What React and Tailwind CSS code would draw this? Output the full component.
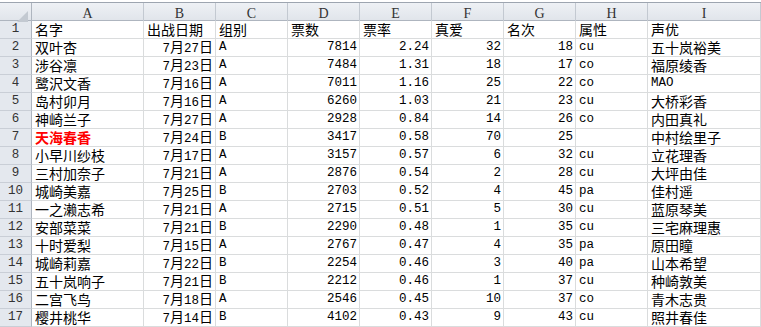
import React from 'react';

const cols = ['A', 'B', 'C', 'D', 'E', 'F', 'G', 'H', 'I'];

const rows = [
  ['双叶杏', '7|27', 'A', '7814', '2.24', '32', '18', 'cu', '五十岚裕美'],
  ['涉谷凛', '7|23', 'A', '7484', '1.31', '18', '17', 'co', '福原绫香'],
  ['鹭沢文香', '7|16', 'A', '7011', '1.16', '25', '22', 'co', 'MAO'],
  ['岛村卯月', '7|16', 'A', '6260', '1.03', '21', '23', 'cu', '大桥彩香'],
  ['神崎兰子', '7|27', 'A', '2928', '0.84', '14', '26', 'co', '内田真礼'],
  ['天海春香', '7|24', 'B', '3417', '0.58', '70', '25', '', '中村绘里子'],
  ['小早川纱枝', '7|17', 'A', '3157', '0.57', '6', '32', 'cu', '立花理香'],
  ['三村加奈子', '7|21', 'A', '2876', '0.54', '2', '28', 'cu', '大坪由佳'],
  ['城崎美嘉', '7|25', 'B', '2703', '0.52', '4', '45', 'pa', '佳村遥'],
  ['一之濑志希', '7|21', 'A', '2715', '0.51', '5', '30', 'cu', '蓝原琴美'],
  ['安部菜菜', '7|21', 'B', '2290', '0.48', '1', '35', 'cu', '三宅麻理惠'],
  ['十时爱梨', '7|15', 'A', '2767', '0.47', '4', '35', 'pa', '原田瞳'],
  ['城崎莉嘉', '7|22', 'B', '2254', '0.46', '3', '40', 'pa', '山本希望'],
  ['五十岚响子', '7|21', 'B', '2212', '0.46', '1', '37', 'cu', '种崎敦美'],
  ['二宫飞鸟', '7|18', 'A', '2546', '0.45', '10', '37', 'co', '青木志贵'],
  ['樱井桃华', '7|14', 'B', '4102', '0.43', '9', '43', 'cu', '照井春佳'],
];

const gridCols = 'grid grid-cols-[32px_112px_repeat(7,72px)_1fr]';
const cjk = "font-['Noto_Sans_CJK_SC',sans-serif] text-[14px]";
const mono = "font-['Liberation_Mono','Noto_Sans_CJK_SC',monospace] text-[12.5px]";

function Cell({ children, right, red, className = '' }) {
  return (
    <div
      className={`h-[18px] border-b border-r border-[#dadcdd] flex items-center overflow-hidden whitespace-nowrap leading-[17px] ${
        red ? 'text-[#ff0000] font-bold' : 'text-black'
      } ${right ? 'justify-end pr-[2px]' : 'pl-[3px]'} ${className}`}
    >
      {children}
    </div>
  );
}

function DateText({ v }) {
  const [m, d] = v.split('|');
  return (
    <span className={cjk}>
      <span className={mono}>{m}</span>月<span className={mono}>{d}</span>日
    </span>
  );
}

function RowHead({ n }) {
  return (
    <div className="h-[18px] bg-[#e4e8ee] border-b border-r border-[#aeb5bf] border-b-[#c9ced6] flex items-center justify-center text-[12.5px] text-[#333] font-['Liberation_Mono',monospace]">
      {n}
    </div>
  );
}

export default function App() {
  return (
    <div className="w-[761px] h-[327px] overflow-hidden bg-white pt-[2px]">
      {/* column headers */}
      <div className={`${gridCols} h-[19px] border-t border-b border-t-[#9da5b0] border-b-[#aeb5bf] bg-gradient-to-b from-[#eef1f5] to-[#e1e5eb]`}>
        <div className="relative border-r border-[#aeb5bf]">
          <svg className="absolute right-[3px] bottom-[2px]" width="11" height="11" viewBox="0 0 11 11">
            <polygon points="11,0 11,11 0,11" fill="#c3c9d1" />
          </svg>
        </div>
        {cols.map((c) => (
          <div
            key={c}
            className="border-r border-[#c3c9d1] flex items-center justify-center text-[14px] text-[#333] font-['Liberation_Serif',serif]"
          >
            {c}
          </div>
        ))}
      </div>

      {/* header row 1 */}
      <div className={gridCols}>
        <RowHead n={1} />
        {['名字', '出战日期', '组别', '票数', '票率', '真爱', '名次', '属性', '声优'].map((t) => (
          <Cell key={t} className={cjk}>
            {t}
          </Cell>
        ))}
      </div>

      {rows.map((r, i) => (
        <div key={i} className={gridCols}>
          <RowHead n={i + 2} />
          <Cell red={r[0] === '天海春香'} className={cjk}>
            {r[0]}
          </Cell>
          <Cell right>
            <DateText v={r[1]} />
          </Cell>
          <Cell className={mono}>{r[2]}</Cell>
          <Cell right className={mono}>{r[3]}</Cell>
          <Cell right className={mono}>{r[4]}</Cell>
          <Cell right className={mono}>{r[5]}</Cell>
          <Cell right className={mono}>{r[6]}</Cell>
          <Cell className={mono}>{r[7]}</Cell>
          <Cell className={r[8] === 'MAO' ? mono : cjk}>{r[8]}</Cell>
        </div>
      ))}
    </div>
  );
}
